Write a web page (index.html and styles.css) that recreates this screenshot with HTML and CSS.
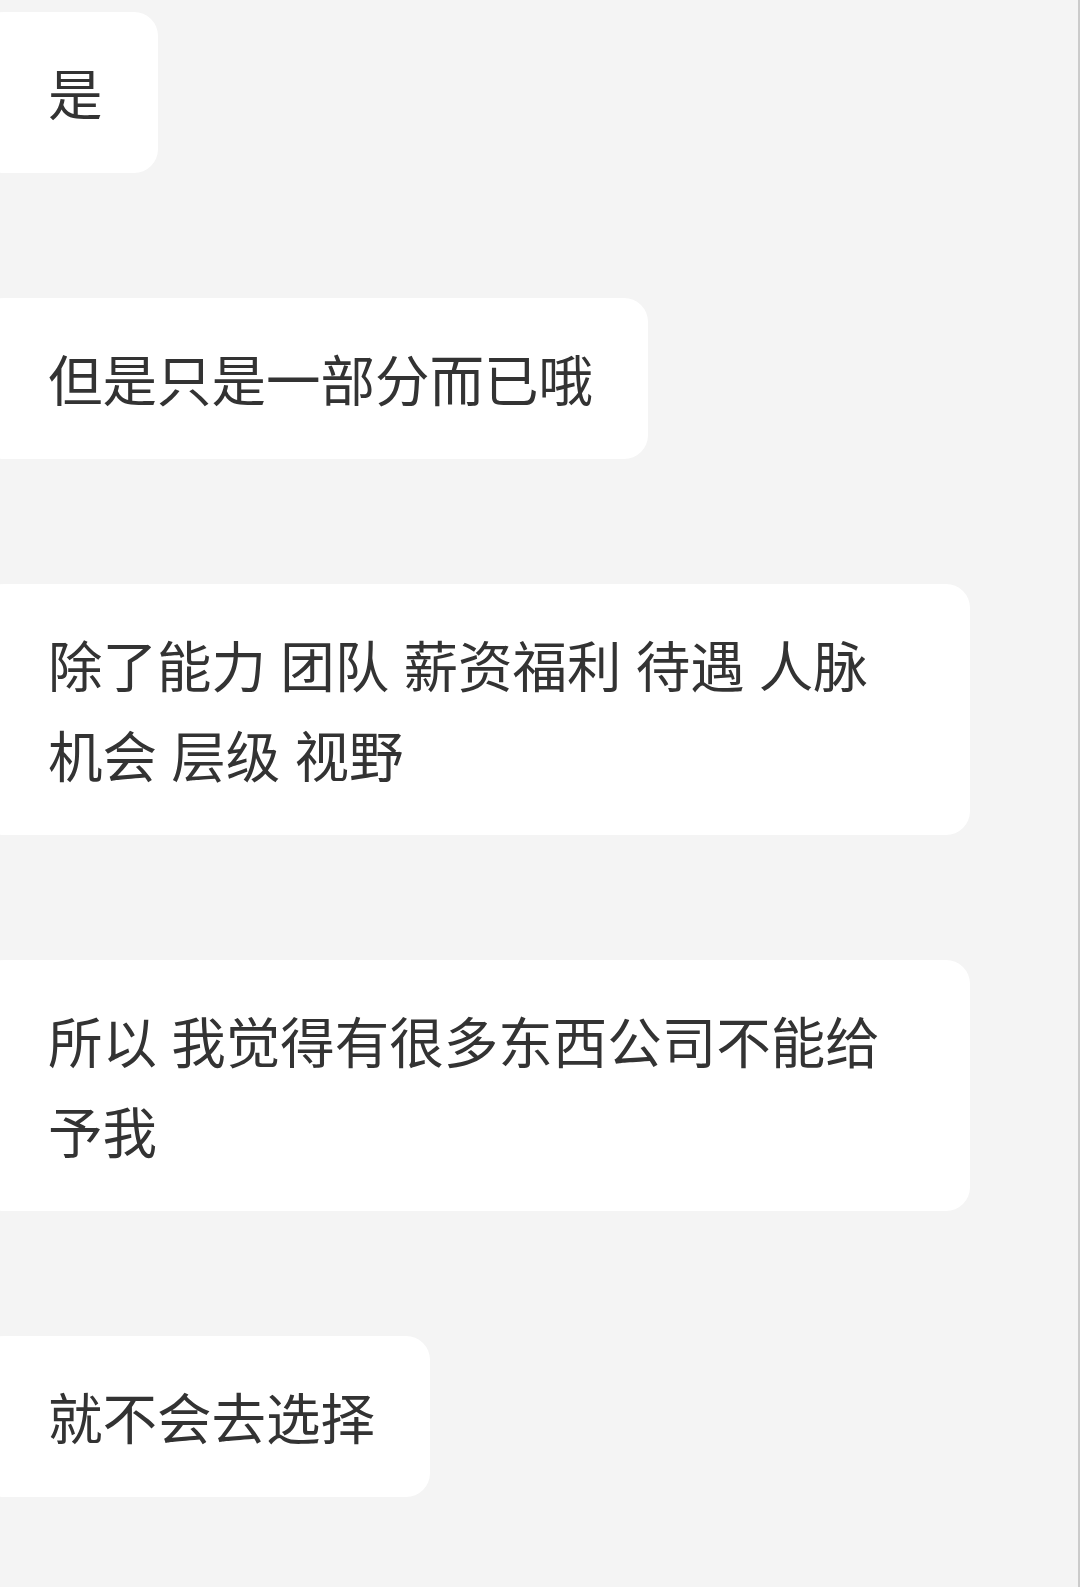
FILE: index.html
```html
<!DOCTYPE html>
<html lang="zh-CN">
<head>
<meta charset="UTF-8" />
<meta name="viewport" content="width=device-width, initial-scale=1.0" />
<title>聊天记录</title>
<link rel="stylesheet" href="styles.css">
</head>
<body>
<div class="chat">
  <div class="msg">是</div>
  <div class="msg">但是只是一部分而已哦</div>
  <div class="msg">除了能力 团队 薪资福利 待遇 人脉 机会 层级 视野</div>
  <div class="msg">所以 我觉得有很多东西公司不能给予我</div>
  <div class="msg">就不会去选择</div>
</div>
</body>
</html>
```

FILE: styles.css
```css
html,body{margin:0;padding:0;}
body{
  background:#f4f4f4;color:#333;
  font-family:"Noto Sans CJK SC","Noto Sans",sans-serif;
  min-height:1587px;box-sizing:border-box;
  border-right:2px solid #cbcbcb;
}
/* chat list ---------------------------------------------- */
.chat{
  display:flex;flex-direction:column;align-items:flex-start;gap:125px;
  padding-top:12px;
}
.msg{
  background:#fff;border-radius:24px;
  margin-left:-20px;padding:35px 55px 36px 68px;
  max-width:867px;
  font-size:54.5px;line-height:90px;word-spacing:2px;
}
```
